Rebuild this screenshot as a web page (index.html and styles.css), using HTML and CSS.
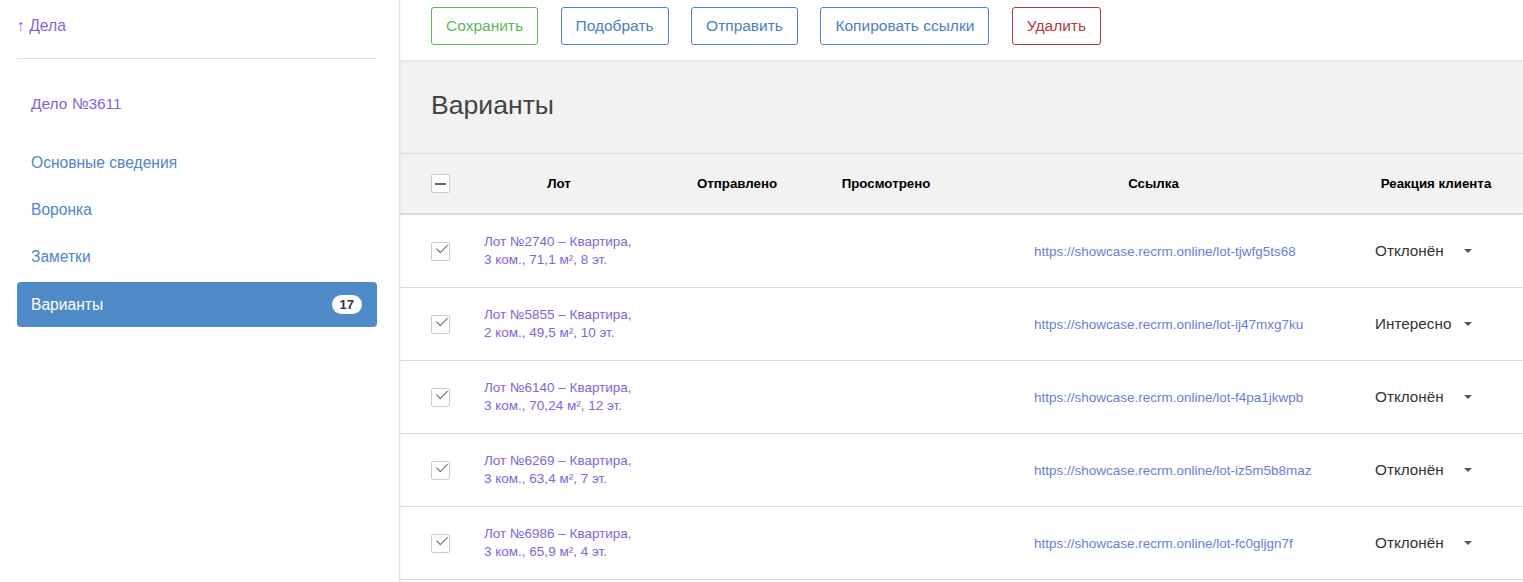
FILE: index.html
```html
<!DOCTYPE html>
<html lang="ru">
<head>
<meta charset="utf-8">
<title>Варианты</title>
<link rel="stylesheet" href="styles.css">
</head>
<body>
<div class="layout">
  <aside class="sidebar">
    <a class="back" href="#">↑ Дела</a>
    <div class="case-title">Дело №3611</div>
    <nav class="nav">
      <a class="nav-item" href="#">Основные сведения</a>
      <a class="nav-item" href="#">Воронка</a>
      <a class="nav-item" href="#">Заметки</a>
      <a class="nav-item active" href="#">Варианты <span class="badge">17</span></a>
    </nav>
  </aside>
  <main class="main">
    <div class="toolbar">
      <button class="btn btn-green">Сохранить</button>
      <button class="btn btn-blue">Подобрать</button>
      <button class="btn btn-blue">Отправить</button>
      <button class="btn btn-blue">Копировать ссылки</button>
      <button class="btn btn-red">Удалить</button>
    </div>
    <div class="title-bar"><h1>Варианты</h1></div>
    <div class="table">
      <div class="row head">
        <div class="cell c-check"><span class="cb cb-dash"></span></div>
        <div class="cell c-center">Лот</div>
        <div class="cell c-center">Отправлено</div>
        <div class="cell c-center">Просмотрено</div>
        <div class="cell c-center">Ссылка</div>
        <div class="cell c-center">Реакция клиента</div>
      </div>

      <div class="row">
        <div class="cell c-check"><span class="cb cb-checked"></span></div>
        <div class="cell c-lot"><a href="#">Лот №2740 – Квартира,<br>3 ком., 71,1 м², 8 эт.</a></div>
        <div class="cell"></div>
        <div class="cell"></div>
        <div class="cell c-link"><a href="#">https://showcase.recrm.online/lot-tjwfg5ts68</a></div>
        <div class="cell c-react"><span class="react">Отклонён<span class="caret"></span></span></div>
      </div>

      <div class="row">
        <div class="cell c-check"><span class="cb cb-checked"></span></div>
        <div class="cell c-lot"><a href="#">Лот №5855 – Квартира,<br>2 ком., 49,5 м², 10 эт.</a></div>
        <div class="cell"></div>
        <div class="cell"></div>
        <div class="cell c-link"><a href="#">https://showcase.recrm.online/lot-ij47mxg7ku</a></div>
        <div class="cell c-react"><span class="react">Интересно<span class="caret"></span></span></div>
      </div>

      <div class="row">
        <div class="cell c-check"><span class="cb cb-checked"></span></div>
        <div class="cell c-lot"><a href="#">Лот №6140 – Квартира,<br>3 ком., 70,24 м², 12 эт.</a></div>
        <div class="cell"></div>
        <div class="cell"></div>
        <div class="cell c-link"><a href="#">https://showcase.recrm.online/lot-f4pa1jkwpb</a></div>
        <div class="cell c-react"><span class="react">Отклонён<span class="caret"></span></span></div>
      </div>

      <div class="row">
        <div class="cell c-check"><span class="cb cb-checked"></span></div>
        <div class="cell c-lot"><a href="#">Лот №6269 – Квартира,<br>3 ком., 63,4 м², 7 эт.</a></div>
        <div class="cell"></div>
        <div class="cell"></div>
        <div class="cell c-link"><a href="#">https://showcase.recrm.online/lot-iz5m5b8maz</a></div>
        <div class="cell c-react"><span class="react">Отклонён<span class="caret"></span></span></div>
      </div>

      <div class="row">
        <div class="cell c-check"><span class="cb cb-checked"></span></div>
        <div class="cell c-lot"><a href="#">Лот №6986 – Квартира,<br>3 ком., 65,9 м², 4 эт.</a></div>
        <div class="cell"></div>
        <div class="cell"></div>
        <div class="cell c-link"><a href="#">https://showcase.recrm.online/lot-fc0gljgn7f</a></div>
        <div class="cell c-react"><span class="react">Отклонён<span class="caret"></span></span></div>
      </div>
    </div>
  </main>
</div>
</body>
</html>
```

FILE: styles.css
```css
html, body {
  margin: 0;
  padding: 0;
  height: 100%;
  overflow: hidden;
}
body {
  font-family: "Liberation Sans", Arial, sans-serif;
  color: #333;
  background: #fff;
}
a { text-decoration: none; }

.layout {
  display: flex;
  height: 100vh;
}

/* Sidebar */
.sidebar {
  width: 360px;
  flex: 0 0 360px;
  padding: 0 22px 0 17px;
  border-right: 1px solid #e6e6e6;
  box-shadow: 1px 0 3px rgba(0,0,0,0.04);
  position: relative;
  z-index: 2;
  background: #fff;
}
.back {
  display: block;
  font-size: 15.7px;
  line-height: 20px;
  padding-top: 16px;
  height: 42px;
  color: #8663d6;
  border-bottom: 1px solid #ddd;
}
.case-title {
  margin-top: 35px;
  padding-left: 14px;
  font-size: 15.5px;
  line-height: 20px;
  color: #8663d6;
}
.nav {
  margin-top: 26px;
  display: flex;
  flex-direction: column;
  gap: 2px;
}
.nav-item {
  display: flex;
  align-items: center;
  justify-content: space-between;
  height: 45px;
  padding: 0 15px 0 14px;
  font-size: 15.6px;
  color: #4f86c6;
  border-radius: 4px;
}
.nav-item.active {
  background: #4f8ac9;
  color: #fff;
  height: 45px;
  margin-top: 1px;
}
.badge {
  display: inline-block;
  background: #fff;
  color: #333;
  font-size: 13px;
  font-weight: bold;
  line-height: 19px;
  padding: 0 8px;
  border-radius: 10px;
}

/* Main */
.main {
  flex: 1;
  min-width: 0;
  background: #fff;
}
.toolbar {
  height: 60px;
  box-sizing: border-box;
  padding: 7px 31px 0;
  display: flex;
  gap: 22.5px;
  align-items: flex-start;
  background: #fff;
  box-shadow: 0 1px 3px rgba(0,0,0,0.08);
  position: relative;
  z-index: 1;
}
.btn {
  font-family: "Liberation Sans", Arial, sans-serif;
  font-size: 15.5px;
  height: 38px;
  padding: 0 14px;
  background: #fff;
  border: 1px solid;
  border-radius: 3px;
}
.btn-green { color: #5cb85c; border-color: #5cb85c; }
.btn-blue { color: #4a80c2; border-color: #4a86c6; }
.btn-red { color: #b0383a; border-color: #b0383a; }

.title-bar {
  background: #f2f2f2;
  padding: 30px 31px 33px;
  border-bottom: 1px solid #ddd;
}
.title-bar h1 {
  margin: 0;
  font-size: 26.6px;
  line-height: 30px;
  font-weight: normal;
  color: #444;
}

/* Table */
.row {
  display: grid;
  grid-template-columns: 68px 182px 174px 124px 411px 154px 1fr;
  height: 72px;
  border-bottom: 1px solid #ddd;
  align-items: center;
}
.row.head {
  height: 59px;
  background: #f2f2f2;
  border-bottom: 2px solid #ddd;
  font-size: 13.3px;
  font-weight: bold;
  color: #000;
}
.cell { min-width: 0; }
.c-center { text-align: center; }
.c-check {
  padding-left: 31px;
  display: flex;
  align-items: center;
}
.cb {
  display: block;
  width: 17px;
  height: 17px;
  border: 1px solid #ccc;
  border-radius: 2px;
  background: #fff;
  position: relative;
}
.cb-dash::after {
  content: "";
  position: absolute;
  left: 3px;
  right: 3px;
  top: 8px;
  height: 2px;
  background: #666;
}
.cb-checked::after {
  content: "";
  position: absolute;
  left: 5px;
  top: 2px;
  width: 9px;
  height: 5px;
  border-left: 1.5px solid #666;
  border-bottom: 1.5px solid #666;
  transform: translate(-1px, 4px) rotate(-45deg) scaleX(1.1);
  transform-origin: left top;
}
.c-lot {
  padding-left: 16px;
  font-size: 13.5px;
  line-height: 18px;
  white-space: nowrap;
}
.c-lot a { color: #8663d6; }
.c-link {
  padding-left: 86px;
  font-size: 13.5px;
  white-space: nowrap;
}
.c-link a { color: #6a7ed6; }
.c-react {
  padding-left: 16px;
  font-size: 15.3px;
  color: #333;
  white-space: nowrap;
}
.react {
  display: inline-flex;
  align-items: center;
  justify-content: space-between;
  width: 97px;
}
.caret {
  width: 0;
  height: 0;
  border-left: 4px solid transparent;
  border-right: 4px solid transparent;
  border-top: 4px solid #555;
  margin-left: 8px;
}
```
